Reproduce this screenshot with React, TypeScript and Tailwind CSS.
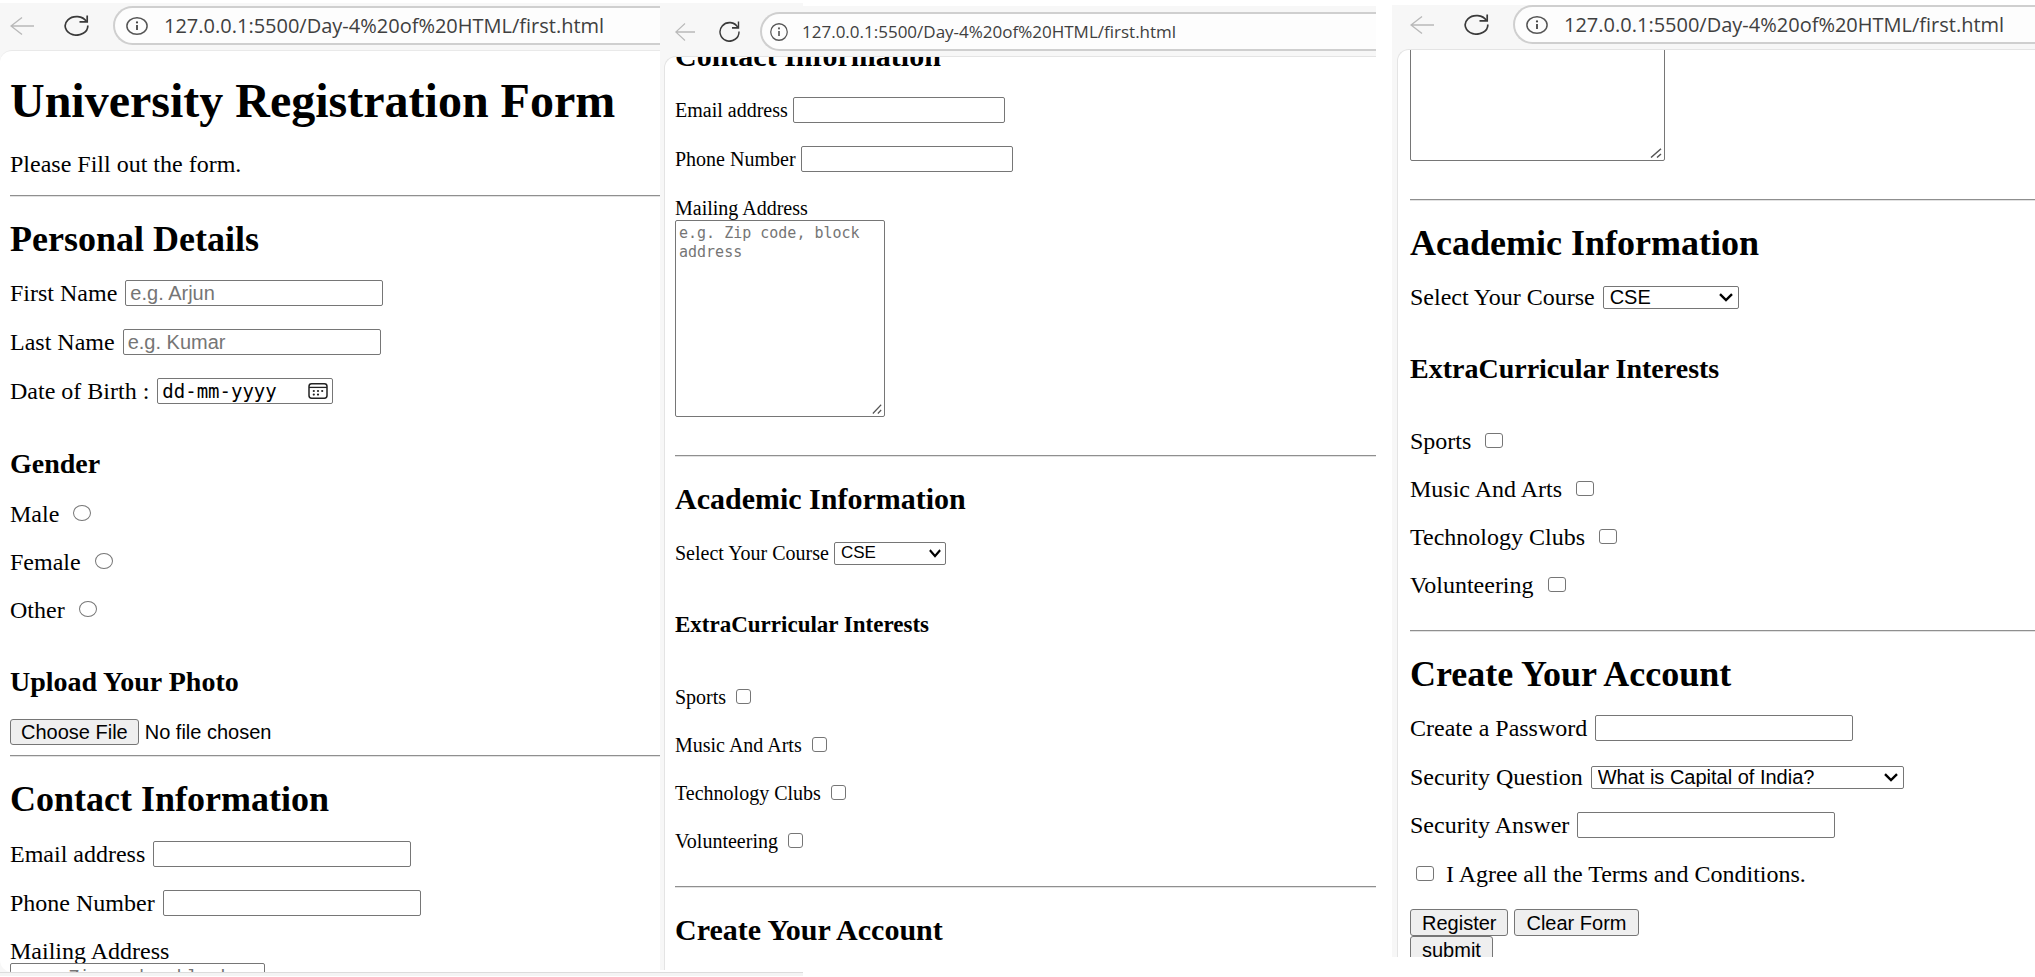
import { useId, type ReactNode } from "react";

type Scale = "wide" | "normal";

const serif = "font-['Liberation_Serif','Times_New_Roman',serif]";
const sans = "font-['Liberation_Sans',Arial,sans-serif]";
const mono = "font-['DejaVu_Sans_Mono',monospace]";

function BackIcon({ scale }: { scale: Scale }) {
  return (
    <svg viewBox="0 0 24 20" preserveAspectRatio="none" aria-hidden="true" className={scale === "wide" ? "h-5 w-6" : "h-5 w-5"}>
      <path d="M24 10H1M12 1.5L1 10l11 8.5" fill="none" stroke="#b9b9b9" strokeWidth="1.4" />
    </svg>
  );
}

function ReloadIcon({ scale }: { scale: Scale }) {
  return (
    <svg viewBox="0 0 25 21" preserveAspectRatio="none" aria-hidden="true" className={scale === "wide" ? "h-[21px] w-[25px]" : "h-[21px] w-[21px]"}>
      <path d="M22.5 6.5A11.3 9.3 0 1 0 23.8 10.5" fill="none" stroke="#3a3a3a" strokeWidth="1.7" />
      <path d="M23.2 0.5V6.8H15.5" fill="none" stroke="#3a3a3a" strokeWidth="1.7" />
    </svg>
  );
}

function InfoIcon({ scale }: { scale: Scale }) {
  return (
    <svg viewBox="0 0 22 18" preserveAspectRatio="none" aria-hidden="true" className={scale === "wide" ? "h-[18px] w-[22px] shrink-0" : "h-[18px] w-[18px] shrink-0"}>
      <ellipse cx="11" cy="9" rx="10.1" ry="8.2" fill="none" stroke="#555" strokeWidth="1.5" />
      <path d="M11 8v5" stroke="#444" strokeWidth="1.8" />
      <circle cx="11" cy="5.4" r="1.1" fill="#444" />
    </svg>
  );
}

function Toolbar({ scale, className }: { scale: Scale; className: string }) {
  const wide = scale === "wide";
  return (
    <div className={`flex shrink-0 items-start ${className}`}>
      <div className="flex h-[39px] items-center">
        <button type="button" aria-label="Back" disabled>
          <BackIcon scale={scale} />
        </button>
        <button type="button" aria-label="Reload" className={wide ? "ml-[30px]" : "ml-6"}>
          <ReloadIcon scale={scale} />
        </button>
      </div>
      <div
        className={`flex h-[39px] min-w-0 flex-1 items-center rounded-l-full border-2 border-r-0 border-[#cfcfcf] bg-[#fdfdfd] ${
          wide ? "ml-6 gap-4 pl-[11px]" : "ml-5 gap-[14px] pl-2"
        }`}
      >
        <InfoIcon scale={scale} />
        <input
          type="text"
          readOnly
          aria-label="Address"
          value="127.0.0.1:5500/Day-4%20of%20HTML/first.html"
          className={`min-w-0 flex-1 font-['Open_Sans','Noto_Sans',sans-serif] text-[#404040] outline-none ${
            wide ? "text-[20px]" : "text-[17px]"
          }`}
        />
      </div>
    </div>
  );
}

function Heading({ scale, className, children }: { scale: Scale; className: string; children: ReactNode }) {
  return (
    <h2 className={`leading-9 font-bold ${scale === "wide" ? "text-[36px]" : "text-[30px]"} ${className}`}>{children}</h2>
  );
}

function SubHeading({ scale, className, children }: { scale: Scale; className: string; children: ReactNode }) {
  return (
    <h3 className={`leading-7 font-bold ${scale === "wide" ? "text-[28px]" : "text-[23px]"} ${className}`}>{children}</h3>
  );
}

function Rule({ className }: { className: string }) {
  return <hr className={`h-[2px] border-t border-b border-t-[#8f8f8f] border-b-[#e2e2e2] ${className}`} />;
}

function Field({
  scale,
  label,
  className,
  type = "text",
  placeholder,
}: {
  scale: Scale;
  label: string;
  className: string;
  type?: string;
  placeholder?: string;
}) {
  const id = useId();
  return (
    <div className={`flex h-[26px] items-center ${scale === "wide" ? "gap-2" : "gap-[5px]"} ${className}`}>
      <label htmlFor={id}>{label}</label>
      <input
        id={id}
        type={type}
        placeholder={placeholder}
        className={`h-[26px] rounded-[2px] border border-[#767676] bg-white px-1 placeholder:text-[#757575] ${sans} ${
          scale === "wide" ? "w-[258px] text-[20px]" : "w-[212px] text-[17px]"
        }`}
      />
    </div>
  );
}

function DateField() {
  const id = useId();
  return (
    <div className="mt-[23px] flex h-[26px] items-center gap-2">
      <label htmlFor={id}>Date of Birth :</label>
      <div className="flex h-[26px] w-[176px] items-center rounded-[2px] border border-[#767676] bg-white pr-1 pl-1">
        <input
          id={id}
          type="text"
          placeholder="dd-mm-yyyy"
          className={`min-w-0 flex-1 text-[19px] outline-none placeholder:text-black ${mono}`}
        />
        <button type="button" aria-label="Open calendar">
          <svg viewBox="0 0 20 16" className="h-4 w-5" aria-hidden="true">
            <rect x="1" y="0.8" width="18" height="14.4" rx="2.6" fill="none" stroke="#222" strokeWidth="1.5" />
            <path d="M1 4.4h18" stroke="#222" strokeWidth="1.3" />
            <g fill="#222">
              <circle cx="5.8" cy="8" r="1.1" />
              <circle cx="10" cy="8" r="1.1" />
              <circle cx="14.2" cy="8" r="1.1" />
              <circle cx="5.8" cy="11.6" r="1.1" />
              <circle cx="10" cy="11.6" r="1.1" />
            </g>
          </svg>
        </button>
      </div>
    </div>
  );
}

function Choice({
  scale,
  label,
  className,
  type,
  name,
}: {
  scale: Scale;
  label: string;
  className: string;
  type: "radio" | "checkbox";
  name: string;
}) {
  const id = useId();
  return (
    <div className={`flex h-6 items-center ${scale === "wide" ? "gap-[14px]" : "gap-[10px]"} ${className}`}>
      <label htmlFor={id}>{label}</label>
      <input
        id={id}
        type={type}
        name={name}
        className={`mb-[2px] appearance-none border border-[#767676] bg-white checked:bg-[#0075ff] ${
          type === "radio" ? "h-4 rounded-[50%]" : "h-[15px] rounded-[3px]"
        } ${scale === "wide" ? "w-[18px]" : "w-[15px]"}`}
      />
    </div>
  );
}

function SelectField({
  scale,
  label,
  options,
  width,
  className,
}: {
  scale: Scale;
  label: string;
  options: string[];
  width: string;
  className: string;
}) {
  const id = useId();
  return (
    <div className={`flex h-6 items-center ${scale === "wide" ? "gap-2" : "gap-[5px]"} ${className}`}>
      <label htmlFor={id}>{label}</label>
      <div className={`grid items-center ${width}`}>
        <select
          id={id}
          className={`col-start-1 row-start-1 h-[23px] w-full appearance-none rounded-[2px] border border-[#767676] bg-white pl-[6px] leading-5 ${sans} ${
            scale === "wide" ? "text-[20px]" : "text-[17px]"
          }`}
        >
          {options.map((option) => (
            <option key={option}>{option}</option>
          ))}
        </select>
        <svg
          viewBox="0 0 14 9"
          preserveAspectRatio="none"
          aria-hidden="true"
          className={`pointer-events-none col-start-1 row-start-1 h-[9px] justify-self-end ${
            scale === "wide" ? "mr-[6px] w-[14px]" : "mr-[5px] w-3"
          }`}
        >
          <path d="M1 1.2l6 5.8 6-5.8" fill="none" stroke="#000" strokeWidth="2.4" />
        </svg>
      </div>
    </div>
  );
}

function MailingField({ scale, className, labelled = true }: { scale: Scale; className: string; labelled?: boolean }) {
  const id = useId();
  const wide = scale === "wide";
  return (
    <div className={`flex flex-col items-start ${className}`}>
      {labelled && (
        <label htmlFor={id} className="leading-6">
          Mailing Address
        </label>
      )}
      <div className="grid">
        <textarea
          id={id}
          aria-label={labelled ? undefined : "Mailing Address"}
          placeholder="e.g. Zip code, block address"
          className={`col-start-1 row-start-1 h-[197px] resize-none rounded-[2px] border border-[#767676] bg-white p-[3px] leading-[19px] placeholder:text-[#757575] ${mono} ${
            wide ? "w-[255px] text-[18px]" : "w-[210px] text-[15px]"
          }`}
        />
        <svg
          viewBox="0 0 12 10"
          preserveAspectRatio="none"
          aria-hidden="true"
          className={`pointer-events-none col-start-1 row-start-1 mr-[3px] mb-[3px] h-[10px] self-end justify-self-end ${
            wide ? "w-3" : "w-[10px]"
          }`}
        >
          <path d="M1 9.5L11 0.8M7 9.5L11 6" fill="none" stroke="#555" strokeWidth="1.5" />
        </svg>
      </div>
    </div>
  );
}

function AcademicSection({ scale }: { scale: Scale }) {
  return (
    <section>
      <Rule className="mt-[38px]" />
      <Heading scale={scale} className="mt-6">
        Academic Information
      </Heading>
      <SelectField
        scale={scale}
        label="Select Your Course"
        options={["CSE", "Mechanical"]}
        width={scale === "wide" ? "w-[136px]" : "w-[112px]"}
        className="mt-6"
      />
      <SubHeading scale={scale} className="mt-[46px]">
        ExtraCurricular Interests
      </SubHeading>
      <Choice scale={scale} type="checkbox" name="sports" label="Sports" className="mt-[46px]" />
      <Choice scale={scale} type="checkbox" name="arts" label="Music And Arts" className="mt-6" />
      <Choice scale={scale} type="checkbox" name="tech" label="Technology Clubs" className="mt-6" />
      <Choice scale={scale} type="checkbox" name="volunteering" label="Volunteering" className="mt-6" />
      <Rule className="mt-[33px]" />
      <Heading scale={scale} className="mt-6">
        Create Your Account
      </Heading>
    </section>
  );
}

const buttonStyle = `h-[27px] rounded-[3px] border border-[#767676] bg-[#efefef] px-[11px] text-[20px] leading-6 ${sans}`;

function FirstWindow() {
  return (
    <div className={`mt-[3px] flex min-w-0 flex-[660] flex-col overflow-hidden bg-[#f7f7f7] text-[24px] text-black ${serif}`}>
      <Toolbar scale="wide" className="h-[47px] pt-[3px] pl-[10px]" />
      <form className="min-h-0 flex-1 overflow-hidden rounded-l-xl border-t border-[#e9e9e9] bg-white pl-[10px] whitespace-nowrap">
        <h1 className="mt-[26px] text-[48px] leading-[48px] font-bold">University Registration Form</h1>
        <p className="mt-[27px] leading-6">Please Fill out the form.</p>
        <Rule className="mt-[19px]" />
        <Heading scale="wide" className="mt-6">
          Personal Details
        </Heading>
        <Field scale="wide" label="First Name" placeholder="e.g. Arjun" className="mt-[23px]" />
        <Field scale="wide" label="Last Name" placeholder="e.g. Kumar" className="mt-[23px]" />
        <DateField />
        <SubHeading scale="wide" className="mt-[46px]">
          Gender
        </SubHeading>
        <Choice scale="wide" type="radio" name="gender" label="Male" className="mt-6" />
        <Choice scale="wide" type="radio" name="gender" label="Female" className="mt-6" />
        <Choice scale="wide" type="radio" name="gender" label="Other" className="mt-6" />
        <SubHeading scale="wide" className="mt-[46px]">
          Upload Your Photo
        </SubHeading>
        <input
          type="file"
          aria-label="Upload Your Photo"
          className={`mt-[23px] block h-[26px] w-full text-[20px] leading-6 file:mr-[6px] file:h-[26px] file:rounded-[3px] file:border file:border-solid file:border-[#767676] file:bg-[#efefef] file:px-[10px] ${sans}`}
        />
        <Rule className="mt-[10px]" />
        <Heading scale="wide" className="mt-6">
          Contact Information
        </Heading>
        <Field scale="wide" type="email" label="Email address" className="mt-6" />
        <Field scale="wide" type="tel" label="Phone Number" className="mt-[23px]" />
        <MailingField scale="wide" className="mt-[23px]" />
      </form>
      <div className="h-1 shrink-0 border-t border-[#dcdcdc] bg-[#f4f4f4]" />
    </div>
  );
}

function SecondWindow() {
  return (
    <div className={`flex min-w-0 flex-[716] flex-col pt-[3px] text-[20px] text-black ${serif}`}>
      <div className="h-[3px] w-[20%] shrink-0 bg-[#f7f7f7]" />
      <div className="flex min-h-0 flex-1 flex-col overflow-hidden bg-[#f7f7f7]">
        <Toolbar scale="normal" className="h-[50px] pt-[6px] pl-[15px]" />
        <form className="ml-1 min-h-0 flex-1 overflow-hidden rounded-tl-xl border-t border-l border-[#e4e4e4] bg-white pl-[10px] whitespace-nowrap">
          <Heading scale="normal" className="mt-[-19px]">
            Contact Information
          </Heading>
          <Field scale="normal" type="email" label="Email address" className="mt-[23px]" />
          <Field scale="normal" type="tel" label="Phone Number" className="mt-[23px]" />
          <MailingField scale="normal" className="mt-6" />
          <AcademicSection scale="normal" />
        </form>
      </div>
      <div className="mt-[2px] h-1 w-[20%] shrink-0 border-t border-[#dcdcdc] bg-[#f4f4f4]" />
    </div>
  );
}

function ThirdWindow() {
  const agree = useId();
  return (
    <div
      className={`mt-[5px] mb-[19px] ml-4 flex min-w-0 flex-[643] flex-col overflow-hidden bg-[#f7f7f7] text-[24px] text-black ${serif}`}
    >
      <Toolbar scale="wide" className="h-[44px] pl-[18px]" />
      <form className="ml-[5px] min-h-0 flex-1 overflow-hidden rounded-tl-xl border-t border-l border-[#e4e4e4] bg-white pl-3 whitespace-nowrap">
        <MailingField scale="wide" labelled={false} className="mt-[-86px]" />
        <AcademicSection scale="wide" />
        <Field scale="wide" type="password" label="Create a Password" className="mt-[23px]" />
        <SelectField
          scale="wide"
          label="Security Question"
          options={["What is Capital of India?"]}
          width="w-[313px]"
          className="mt-6"
        />
        <Field scale="wide" label="Security Answer" className="mt-[23px]" />
        <div className="mt-6 flex h-6 items-center gap-3 pl-[6px]">
          <input
            id={agree}
            type="checkbox"
            className="mb-[2px] h-[15px] w-[18px] appearance-none rounded-[3px] border border-[#767676] bg-white checked:bg-[#0075ff]"
          />
          <label htmlFor={agree}>I Agree all the Terms and Conditions.</label>
        </div>
        <div className="mt-[23px] flex gap-[6px]">
          <button type="button" className={buttonStyle}>
            Register
          </button>
          <button type="reset" className={buttonStyle}>
            Clear Form
          </button>
        </div>
        <button type="button" className={`block ${buttonStyle}`}>
          submit
        </button>
      </form>
    </div>
  );
}

export default function App() {
  return (
    <main className="flex h-screen w-full overflow-hidden bg-white pb-px">
      <FirstWindow />
      <SecondWindow />
      <ThirdWindow />
    </main>
  );
}
